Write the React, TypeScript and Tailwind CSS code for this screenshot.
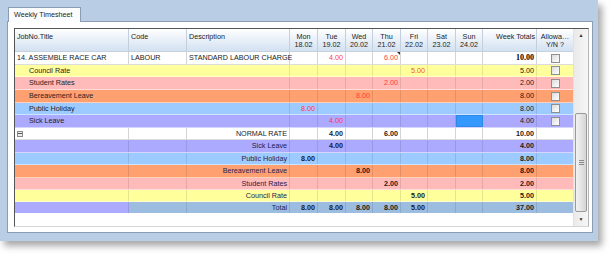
import React from 'react';

type Cell = { v: string; c?: string; b?: boolean };
type Row = {
  bg: string;
  h: number;
  label?: string;
  days: (Cell | null)[];
  total: Cell;
  check?: boolean;
  selSun?: boolean;
};

const COLS = 'grid grid-cols-[114px_58px_103px_28px_28px_27px_28px_27px_28px_27px_54px_36px]';
const RED = 'text-[#ff3b3b]';

const days = [
  ['Mon', '18.02'],
  ['Tue', '19.02'],
  ['Wed', '20.02'],
  ['Thu', '21.02'],
  ['Fri', '22.02'],
  ['Sat', '23.02'],
  ['Sun', '24.02'],
];

const d = (i: number, cell: Cell) => {
  const a: (Cell | null)[] = [null, null, null, null, null, null, null];
  a[i] = cell;
  return a;
};

const topRows: Row[] = [
  { bg: 'bg-[#ffff9c]', h: 12, label: 'Council Rate', days: d(4, { v: '5.00', c: 'text-[#f05a1e]' }), total: { v: '5.00' }, check: true },
  { bg: 'bg-[#ffbaba]', h: 13, label: 'Student Rates', days: d(3, { v: '2.00', c: RED }), total: { v: '2.00' }, check: true },
  { bg: 'bg-[#ffa070]', h: 13, label: 'Bereavement Leave', days: d(2, { v: '8.00', c: RED }), total: { v: '8.00' }, check: true },
  { bg: 'bg-[#9dcbff]', h: 12, label: 'Public Holiday', days: d(0, { v: '8.00', c: RED }), total: { v: '8.00' }, check: true },
  { bg: 'bg-[#abaaff]', h: 13, label: 'Sick Leave', days: d(1, { v: '4.00', c: RED }), total: { v: '4.00' }, check: true, selSun: true },
];

const lowRows: Row[] = [
  { bg: 'bg-[#abaaff]', h: 13, label: 'Sick Leave', days: d(1, { v: '4.00', b: true }), total: { v: '4.00', b: true } },
  { bg: 'bg-[#9dcbff]', h: 12, label: 'Public Holiday', days: d(0, { v: '8.00', b: true }), total: { v: '8.00', b: true } },
  { bg: 'bg-[#ffa070]', h: 13, label: 'Bereavement Leave', days: d(2, { v: '8.00', b: true }), total: { v: '8.00', b: true } },
  { bg: 'bg-[#ffbaba]', h: 12, label: 'Student Rates', days: d(3, { v: '2.00', b: true }), total: { v: '2.00', b: true } },
  { bg: 'bg-[#ffff9c]', h: 12, label: 'Council Rate', days: d(4, { v: '5.00', b: true }), total: { v: '5.00', b: true } },
];

function Check() {
  return (
    <span className="block w-[9px] h-[9px] border border-[#8e8f8f] bg-gradient-to-br from-[#dcdcdc] to-white" />
  );
}

function Num({ cell }: { cell: Cell | null }) {
  if (!cell) return null;
  return <span className={`${cell.c ?? 'text-[#1a1a1a]'} ${cell.b ? 'font-bold' : ''}`}>{cell.v}</span>;
}

function DayCells({ row }: { row: Row }) {
  return (
    <>
      {row.days.map((c, i) => (
        <div
          key={i}
          className={`relative flex items-center justify-end pr-[2px] border-r border-black/10 ${
            row.selSun && i === 6 ? 'bg-[#3399ff] border border-[#5a3a3a]' : ''
          }`}
        >
          <Num cell={c} />
        </div>
      ))}
      <div className="flex items-center justify-end pr-[2px] border-r border-black/10">
        <Num cell={row.total} />
      </div>
      <div className="flex items-center justify-center">{row.check && <Check />}</div>
    </>
  );
}

export default function App() {
  return (
    <div className="w-[615px] h-[256px] bg-white font-['Liberation_Sans',Arial,sans-serif] text-[7.2px] leading-none text-[#1a1a1a]">
      <div className="w-[598px] h-[241px] bg-[#b9cde5] pt-[7px] pl-[7px] shadow-[4px_5px_7px_rgba(0,0,0,0.35)]">
        <div className="relative z-10 ml-[1px] -mb-[1px] w-[73px] h-[15px] bg-[#fbfcfe] border border-b-0 border-[#8c9db3] flex items-center pl-[5px] text-[#1d1d1d]">
          Weekly Timesheet
        </div>
        <div className="w-[586px] h-[212px] bg-white border border-[#8c9db3] pt-[6px] pl-[6px]">
          <div className="w-[575px] h-[199px] flex border-l border-t border-[#555] border-r border-r-[#b5b5b5] border-b border-b-[#d6d6d6]">
            <div className="w-[558px] flex flex-col">
              {/* header */}
              <div className={`${COLS} h-[23px] bg-gradient-to-b from-white to-[#d3e1f1] border-b border-[#c5d1de] text-[#222]`}>
                <div className="pl-[2px] pt-[4px] border-r border-[#c3cfdc]">JobNo.Title</div>
                <div className="pl-[2px] pt-[4px] border-r border-[#c3cfdc]">Code</div>
                <div className="pl-[2px] pt-[4px] border-r border-[#c3cfdc]">Description</div>
                {days.map(([a, b]) => (
                  <div key={a} className="flex flex-col items-center pt-[4px] gap-[1px] border-r border-[#c3cfdc]">
                    <span>{a}</span>
                    <span>{b}</span>
                  </div>
                ))}
                <div className="text-right pr-[1px] pt-[4px] border-r border-[#c3cfdc] whitespace-nowrap">Week Totals</div>
                <div className="flex flex-col items-center pt-[4px] gap-[1px]">
                  <span>Allowa…</span>
                  <span>Y/N ?</span>
                </div>
              </div>

              {/* job row */}
              <div className={`${COLS} h-[13px] bg-white border-b border-[#dcdcdc]`}>
                <div className="flex items-center pl-[2px] border-r border-[#d4d4d4] whitespace-nowrap">14. ASSEMBLE RACE CAR</div>
                <div className="flex items-center pl-[2px] border-r border-[#d4d4d4]">LABOUR</div>
                <div className="flex items-center pl-[2px] border-r border-[#d4d4d4] whitespace-nowrap">STANDARD LABOUR CHARGE</div>
                {[null, { v: '4.00', c: RED }, null, { v: '6.00', c: RED }, null, null, null].map((c, i) => (
                  <div key={i} className="relative flex items-center justify-end pr-[2px] border-r border-[#d4d4d4]">
                    <Num cell={c} />
                    {i === 3 && (
                      <span className="absolute right-0 top-0 w-0 h-0 border-l-[3px] border-l-transparent border-t-[3px] border-t-[#3a2a2a]" />
                    )}
                  </div>
                ))}
                <div className="flex items-center justify-end pr-[2px] border-r border-[#d4d4d4]">
                  <span className="font-bold text-black font-['Liberation_Serif',serif] text-[8px]">10.00</span>
                </div>
                <div className="flex items-center justify-center">
                  <Check />
                </div>
              </div>

              {topRows.map((r) => (
                <div key={r.label} className={`${COLS} ${r.bg} border-b border-white/50`} style={{ height: r.h }}>
                  <div className="col-span-3 flex items-center pl-[14px] border-r border-black/10 text-[#222]">{r.label}</div>
                  <DayCells row={r} />
                </div>
              ))}

              {/* normal rate */}
              <div className={`${COLS} h-[12px] bg-white border-b border-[#dcdcdc]`}>
                <div className="flex items-center pl-[2px] border-r border-[#d4d4d4]">
                  <span className="w-[6px] h-[6px] border border-[#8a8a8a] bg-[#eee] flex items-center justify-center">
                    <span className="w-[4px] h-[1px] bg-[#555]" />
                  </span>
                </div>
                <div className="border-r border-[#d4d4d4]" />
                <div className="flex items-center justify-end pr-[2px] border-r border-[#d4d4d4]">NORMAL RATE</div>
                {[null, { v: '4.00', b: true }, null, { v: '6.00', b: true }, null, null, null].map((c, i) => (
                  <div key={i} className="flex items-center justify-end pr-[2px] border-r border-[#d4d4d4]">
                    <Num cell={c} />
                  </div>
                ))}
                <div className="flex items-center justify-end pr-[2px] border-r border-[#d4d4d4]">
                  <span className="font-bold">10.00</span>
                </div>
                <div />
              </div>

              {lowRows.map((r) => (
                <div key={r.label} className={`${COLS} ${r.bg} border-b border-white/50`} style={{ height: r.h }}>
                  <div className="border-r border-black/10" />
                  <div className="border-r border-black/10" />
                  <div className="flex items-center justify-end pr-[2px] border-r border-black/10 text-[#1f2050]">{r.label}</div>
                  <DayCells row={r} />
                </div>
              ))}

              {/* total */}
              <div className={`${COLS} h-[11px] bg-[#9dbde0]`}>
                <div className="bg-[#abaaff] border-r border-black/10" />
                <div className="border-r border-black/10" />
                <div className="flex items-center justify-end pr-[2px] border-r border-black/10 text-[#1f2050]">Total</div>
                {['8.00', '8.00', '8.00', '8.00', '5.00', '', ''].map((v, i) => (
                  <div key={i} className="flex items-center justify-end pr-[2px] border-r border-black/10 font-bold">
                    {v}
                  </div>
                ))}
                <div className="flex items-center justify-end pr-[2px] border-r border-black/10 font-bold">37.00</div>
                <div />
              </div>
              <div className="flex-1 bg-white" />
            </div>

            {/* scrollbar */}
            <div className="w-[15px] flex flex-col bg-gradient-to-r from-[#eaeaea] to-[#f6f6f6] border-l border-[#e2e2e2]">
              <div className="h-[13px] flex items-center justify-center text-[5px] text-[#333]">▲</div>
              <div className="h-[71px]" />
              <div className="h-[99px] mx-[1px] rounded-[2px] border border-[#9a9a9a] bg-gradient-to-r from-[#f2f2f2] to-[#d6d6d6] flex flex-col items-center justify-center gap-[1px]">
                <span className="w-[5px] h-[1px] bg-[#8a8a8a]" />
                <span className="w-[5px] h-[1px] bg-[#8a8a8a]" />
                <span className="w-[5px] h-[1px] bg-[#8a8a8a]" />
              </div>
              <div className="flex-1 flex items-center justify-center text-[5px] text-[#333]">▼</div>
            </div>
          </div>
        </div>
      </div>
    </div>
  );
}
